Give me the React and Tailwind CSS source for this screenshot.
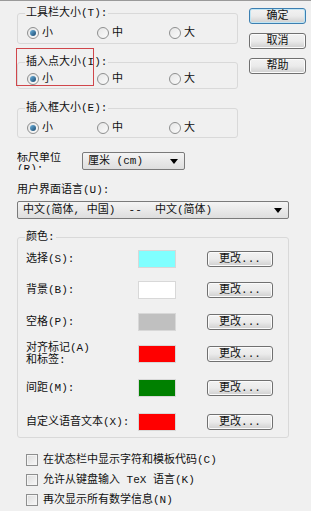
import React from "react";

const FONT = {
  fontFamily: '"Liberation Mono", "Noto Sans CJK SC", monospace',
};

function Radio({ checked, label }) {
  return (
    <div className="flex items-center gap-[3px]">
      <span className="flex h-[12px] w-[12px] items-center justify-center rounded-full border border-[#8e8f8f] bg-gradient-to-br from-[#e6e6e6] to-[#fbfbfb]">
        {checked && (
          <span className="h-[6px] w-[6px] rounded-full bg-gradient-to-br from-[#6fb5e0] to-[#1a4a70]" />
        )}
      </span>
      <span>{label}</span>
    </div>
  );
}

function SizeGroup({ title, className, rowClass }) {
  return (
    <fieldset
      className={`rounded-[3px] border border-[#d9d9d9] px-[8px] ${className}`}
    >
      <legend className="-ml-[1px] px-[1px] leading-[14px]">{title}</legend>
      <div className={`grid grid-cols-[70px_72px_60px] pl-[1px] ${rowClass}`}>
        <Radio checked label="小" />
        <Radio label="中" />
        <Radio label="大" />
      </div>
    </fieldset>
  );
}

function WinButton({ children, primary, className }) {
  return (
    <button
      className={`flex items-center justify-center rounded-[3px] border bg-gradient-to-b from-[#f2f2f2] via-[#ebebeb] to-[#cfcfcf] leading-[12px] ${
        primary
          ? "border-[#3c7fb1] shadow-[inset_0_0_0_1px_#c0e6f5]"
          : "border-[#707070] shadow-[inset_0_0_0_1px_#fbfbfb]"
      } ${className}`}
    >
      {children}
    </button>
  );
}

function Select({ text, className }) {
  return (
    <div
      className={`flex items-center justify-between rounded-[2px] border border-[#7a7a7a] bg-gradient-to-b from-[#f4f4f4] to-[#dedede] pl-[5px] pr-[6px] ${className}`}
    >
      <span className="whitespace-pre">{text}</span>
      <svg width="8" height="5" viewBox="0 0 8 5">
        <path d="M0 0 H8 L4 5 Z" fill="#000" />
      </svg>
    </div>
  );
}

const colorRows = [
  { label: ["选择(S):"], color: "bg-[#80ffff]", h: "h-[31px]" },
  { label: ["背景(B):"], color: "bg-[#ffffff]", h: "h-[32px]" },
  { label: ["空格(P):"], color: "bg-[#c0c0c0]", h: "h-[31px]" },
  { label: ["对齐标记(A)", "和标签:"], color: "bg-[#ff0000]", h: "h-[34px]" },
  { label: ["间距(M):"], color: "bg-[#008000]", h: "h-[34px]" },
  { label: ["自定义语音文本(X):"], color: "bg-[#ff0000]", h: "h-[34px]" },
];

const checks = [
  "在状态栏中显示字符和模板代码(C)",
  "允许从键盘输入 TeX 语言(K)",
  "再次显示所有数学信息(N)",
];

export default function App() {
  return (
    <div
      className="relative h-[511px] w-[311px] overflow-hidden border-t border-[#9a9a9a] bg-[#f0f0f0] text-[11px] text-[#111]"
      style={FONT}
    >
      {/* top: size groups + buttons */}
      <div className="flex">
        <div className="ml-[17px] mt-[5px] w-[218px]">
          <SizeGroup title="工具栏大小(T):" className="h-[38px]" rowClass="mt-[5px]" />
          <SizeGroup title="插入点大小(I):" className="mt-[11px] h-[34px]" rowClass="mt-[2px]" />
          <SizeGroup title="插入框大小(E):" className="mt-[12px] h-[37px]" rowClass="mt-[5px]" />
        </div>
        <div className="ml-[14px] mt-[7px] flex w-[57px] flex-col gap-[9px]">
          <WinButton primary className="h-[16px]">
            确定
          </WinButton>
          <WinButton className="h-[16px]">取消</WinButton>
          <WinButton className="h-[16px]">帮助</WinButton>
        </div>
      </div>

      {/* red annotation box */}
      <div className="absolute left-[16px] top-[47px] h-[38px] w-[78px] border border-[#d0464b]" />

      {/* ruler unit */}
      <div className="ml-[17px] mt-[14px] flex items-start">
        <div className="h-[18px] w-[65px] overflow-hidden pt-[1px] leading-[11px]">
          标尺单位
          <br />
          (R):
        </div>
        <Select text="厘米 (cm)" className="h-[18px] w-[103px]" />
      </div>

      {/* language */}
      <div className="ml-[17px] mt-[13px] leading-[14px]">用户界面语言(U):</div>
      <Select
        text="中文(简体, 中国)  --  中文(简体)"
        className="ml-[17px] mt-[4px] h-[18px] w-[272px]"
      />

      {/* colours */}
      <fieldset className="ml-[17px] mt-[12px] h-[207px] w-[272px] rounded-[3px] border border-[#d9d9d9] pl-[8px]">
        <legend className="-ml-[1px] px-[1px] leading-[12px]">颜色:</legend>
        <div className="flex flex-col">
          {colorRows.map((row, i) => (
            <div key={i} className={`flex items-center ${row.h}`}>
              <div className="w-[112px] leading-[12px]">
                {row.label.map((l, j) => (
                  <div key={j}>{l}</div>
                ))}
              </div>
              <div
                className={`h-[18px] w-[38px] border border-[#d8d8d8] ${row.color}`}
              />
              <WinButton className="ml-[31px] h-[16px] w-[66px]">
                更改...
              </WinButton>
            </div>
          ))}
        </div>
      </fieldset>

      {/* checkboxes */}
      <div className="ml-[26px] mt-[16px] flex flex-col gap-[8px]">
        {checks.map((c, i) => (
          <div key={i} className="flex items-center gap-[5px] leading-[12px]">
            <span className="h-[12px] w-[12px] border border-[#8e8f8f] bg-gradient-to-br from-[#dcdcdc] to-[#f8f8f8] shadow-[inset_0_0_0_1px_#f4f4f4]" />
            <span>{c}</span>
          </div>
        ))}
      </div>
    </div>
  );
}
